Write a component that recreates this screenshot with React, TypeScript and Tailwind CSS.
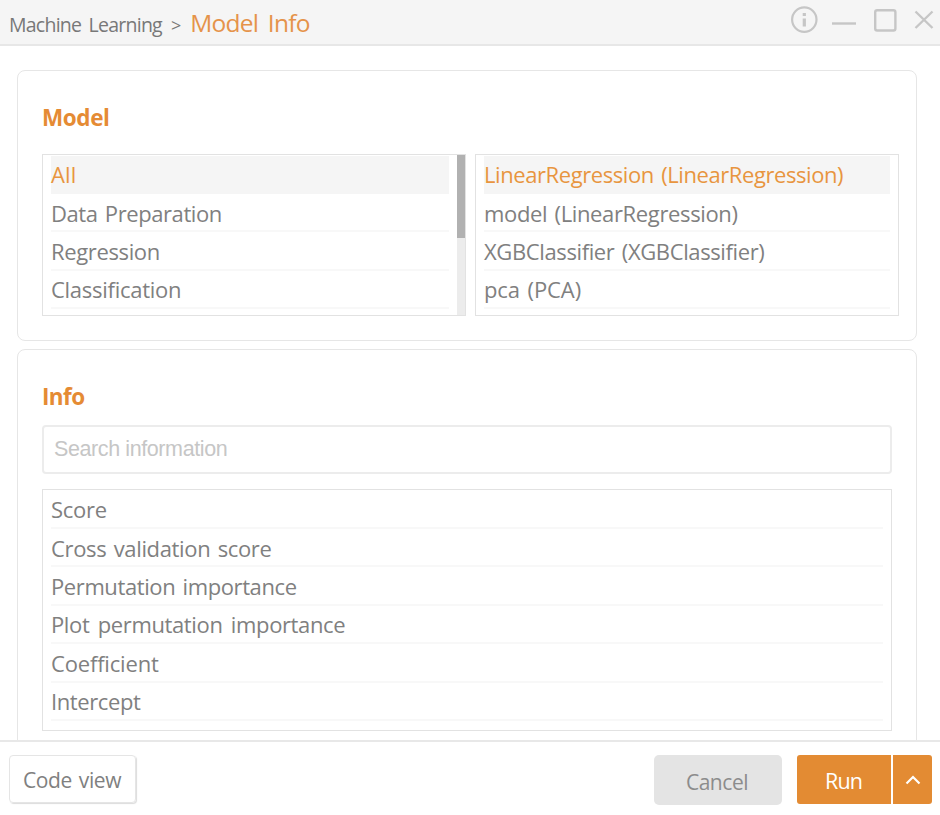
import React from "react";

type Item = { label: string; fit: string };

const categories: Item[] = [
  { label: "All", fit: "tracking-[0.1px]" },
  { label: "Data Preparation", fit: "tracking-[-0.42px] [word-spacing:2px]" },
  { label: "Regression", fit: "tracking-[-0.36px]" },
  { label: "Classification", fit: "tracking-[-0.27px]" },
];

const models: Item[] = [
  { label: "LinearRegression (LinearRegression)", fit: "tracking-[-0.42px] [word-spacing:2px]" },
  { label: "model (LinearRegression)", fit: "tracking-[-0.36px] [word-spacing:2px]" },
  { label: "XGBClassifier (XGBClassifier)", fit: "tracking-[-0.38px] [word-spacing:2px]" },
  { label: "pca (PCA)", fit: "tracking-[-0.1px] [word-spacing:2px]" },
];

const infos: Item[] = [
  { label: "Score", fit: "tracking-[-0.26px]" },
  { label: "Cross validation score", fit: "tracking-[-0.35px] [word-spacing:2px]" },
  { label: "Permutation importance", fit: "tracking-[-0.4px] [word-spacing:2px]" },
  { label: "Plot permutation importance", fit: "tracking-[-0.37px] [word-spacing:3px]" },
  { label: "Coefficient", fit: "tracking-[-0.18px]" },
  { label: "Intercept", fit: "tracking-[-0.4px]" },
];

function List({ items, selected }: { items: Item[]; selected?: number }) {
  return (
    <ul className="min-w-0 flex-1 pt-[0.6px]">
      {items.map((item, i) => (
        <li
          key={item.label}
          className={
            i === selected
              ? "flex h-[38.4px] items-center border-b border-[#f5f5f5] bg-[#f5f5f5] text-[#e8953f]"
              : "flex h-[38.4px] items-center border-b-2 border-[#f8f8f8] pt-[1px] text-[#808080]"
          }
        >
          <span className={"whitespace-nowrap text-[22px] leading-[30px] " + item.fit}>{item.label}</span>
        </li>
      ))}
    </ul>
  );
}

export default function App() {
  return (
    <div className="flex h-[815px] w-[940px] flex-col overflow-hidden bg-white font-['Open_Sans',sans-serif]">
      <header className="flex h-[46px] shrink-0 justify-between border-b-2 border-[#e7e7e7] bg-[#f5f5f5] pl-[9px]">
        <div className="flex items-baseline whitespace-nowrap pt-[1px] text-[#787878]">
          <span className="text-[19.5px] leading-[46px] tracking-[-0.75px] [word-spacing:3px]">Machine Learning</span>
          <span className="ml-[9px] text-[18px]">&gt;</span>
          <span className="ml-[9px] text-[24.5px] leading-[44px] tracking-[-0.75px] text-[#e5934a] [word-spacing:4px]">Model Info</span>
        </div>
        <svg className="h-[40px] w-[150px]" viewBox="790 0 150 40" fill="none" stroke="#c6c6c6">
          <circle cx="804.3" cy="19.6" r="12.2" strokeWidth="2.2" />
          <path d="M804.3 18.500V26.5M804.3 13V16" strokeWidth="3.2" />
          <path d="M832 23.5H856" strokeWidth="2.4" />
          <rect x="875.2" y="10.3" width="20.2" height="20.2" rx="2" strokeWidth="2.4" />
          <path d="M915.500 11.5L932.5 28M932.5 11.5L915.500 28" strokeWidth="2.4" />
        </svg>
      </header>

      <main className="flex min-h-0 flex-1 flex-col gap-[8px] overflow-hidden pl-[17px] pr-[23px] pt-[24px]">
        <section className="h-[271px] shrink-0 rounded-[8px] border border-[#e6e6e6] pl-[24px] pt-[32px]">
          <h2 className="h-[51px] text-[22.5px] font-bold leading-[30px] tracking-[-0.4px] text-[#e58b34]">Model</h2>
          <div className="flex gap-[9px]">
            <div className="flex h-[162px] w-[424px] shrink-0 gap-[8px] border border-[#e2e2e2] pl-[8px]">
              <List items={categories} selected={0} />
              <div className="w-[8px] bg-[#ececec]">
                <div className="h-[83px] bg-[#b1b1b1]" />
              </div>
            </div>
            <div className="flex h-[162px] w-[424px] shrink-0 border border-[#e2e2e2] px-[8px]">
              <List items={models} selected={0} />
            </div>
          </div>
        </section>

        <section className="h-[420px] shrink-0 rounded-[8px] border border-[#e6e6e6] pl-[24px] pt-[32px]">
          <h2 className="h-[43px] text-[22.5px] font-bold leading-[30px] tracking-[-0.6px] text-[#e58b34]">Info</h2>
          <input
            className="block h-[49px] w-[850px] rounded-[4px] border-2 border-[#ececec] pb-[1px] pl-[10px] font-['Liberation_Sans',sans-serif] text-[21.5px] tracking-[-0.4px] outline-none placeholder:text-[#c6c6c6]"
            placeholder="Search information"
          />
          <div className="mt-[15px] flex h-[242px] w-[850px] border border-[#e2e2e2] px-[8px]">
            <List items={infos} />
          </div>
        </section>
      </main>

      <footer className="flex h-[75px] shrink-0 border-t-2 border-[#e8e8e8] pl-[9px] pr-[8px] pt-[13px]">
        <button className="h-[48px] w-[127px] rounded-[4px] border border-[#e5e5e5] pr-[1px] pt-[3px] text-[21px] tracking-[-0.4px] text-[#808080] shadow-[1px_1px_1px_#dcdcdc] [word-spacing:2px]">
          Code view
        </button>
        <button className="ml-auto h-[50px] w-[128px] rounded-[5px] bg-[#e4e4e4] pr-[2px] pt-[5px] text-[21px] tracking-[-0.45px] text-[#8c8c8c]">
          Cancel
        </button>
        <button className="ml-[15px] h-[49px] w-[94px] rounded-l-[3px] bg-[#e38b33] pr-[1px] pt-[4px] text-[21.5px] font-medium tracking-[-0.9px] text-white">
          Run
        </button>
        <button className="ml-[2px] flex h-[49px] w-[39px] items-center justify-center rounded-r-[3px] bg-[#e38b33]">
          <svg className="h-[12px] w-[18px]" viewBox="0 0 18 12" fill="none" stroke="white" strokeWidth="2.2">
            <path d="M2.5 9.500L9 3L15.500 9.500" />
          </svg>
        </button>
      </footer>
    </div>
  );
}
